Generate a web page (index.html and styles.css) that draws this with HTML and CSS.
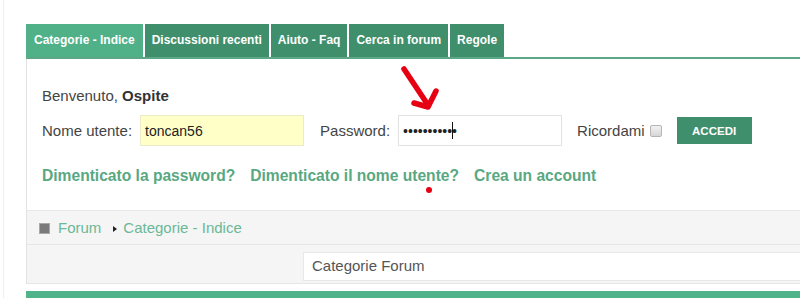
FILE: index.html
```html
<!DOCTYPE html>
<html>
<head>
  <title>Forum - Categorie</title>
  <meta name="viewport" content="width=device-width, initial-scale=1">
  <link rel="stylesheet" href="styles.css">
</head>
<body>
<div class="page">
  <div class="forum">
    <ul class="tabs">
      <li class="active">Categorie - Indice</li>
      <li>Discussioni recenti</li>
      <li>Aiuto - Faq</li>
      <li>Cerca in forum</li>
      <li>Regole</li>
    </ul>

    <div class="forum-body">
      <div class="login">
        <p class="welcome">Benvenuto, <b>Ospite</b></p>
        <form class="login-row" onsubmit="return false">
          <label class="lbl">Nome utente:</label>
          <input type="text" class="field user" value="toncan56">
          <label class="lbl pw-label">Password:</label>
          <span class="pw-wrap">
            <input type="password" class="field" value="12345678901">
            <span class="caret"></span>
          </span>
          <label class="remember">Ricordami <input type="checkbox"></label>
          <button class="btn-login">ACCEDI</button>
        </form>
        <div class="links">
          <a href="#">Dimenticato la password?</a>
          <a href="#">Dimenticato il nome utente?</a>
          <a href="#">Crea un account</a>
        </div>
      </div>

      <div class="breadcrumb">
        <span class="crumb-icon"></span>
        <a href="#">Forum</a>
        <span class="crumb-sep"></span>
        <a href="#">Categorie - Indice</a>
      </div>

      <div class="cat-head">
        <div></div>
        <div class="cat-box">Categorie Forum</div>
      </div>
    </div>

    <div class="green-bar"></div>
  </div>
</div>

<!-- annotazione rossa sopra lo screenshot -->
<svg class="mark" width="60" height="140" viewBox="390 60 60 140">
  <path d="M404 69 L428 105 M414 103 L428 107 L436 91" fill="none" stroke="#e60012" stroke-width="5.5" stroke-linecap="round" stroke-linejoin="round"/>
  <circle cx="429" cy="190" r="3" fill="#e60012"/>
</svg>
</body>
</html>
```

FILE: styles.css
```css
html, body { margin: 0; padding: 0; height: 100%; }
body {
  font-family: 'Liberation Sans', Arial, sans-serif;
  background: #fff;
  color: #444;
  overflow: hidden;
  position: relative;
}
.page {
  margin-left: 3px;
  border-left: 1px solid #efefef;
  padding: 24px 0 0 22px;
  min-height: 100%;
  box-sizing: border-box;
}
.forum { width: 820px; }

.tabs {
  display: flex;
  gap: 2px;
  list-style: none;
  margin: 0;
  padding: 0;
  border-bottom: 2px solid #5aa886;
}
.tabs li {
  height: 33px;
  line-height: 33px;
  padding: 0 7px;
  background: #3f8f6c;
  color: #fff;
  font-size: 12px;
  font-weight: bold;
}
.tabs li.active { background: #50b088; padding: 0 8px; }

.forum-body { border-left: 1px solid #e2e2e2; }

.login { padding: 28px 15px 25px; }
.welcome { margin: 0; font-size: 15px; line-height: 18px; }
.welcome b { color: #333; }

.login-row {
  display: flex;
  align-items: center;
  margin-top: 10px;
  font-size: 15px;
}
.lbl { margin-right: 8px; }
.pw-label { margin-left: 16px; }
.field {
  width: 164px;
  height: 31px;
  box-sizing: border-box;
  padding: 0 4px;
  border: 1px solid #e2e2e2;
  background: #fff;
  font-family: 'Liberation Sans', Arial, sans-serif;
  font-size: 14px;
  color: #222;
  outline: none;
}
.field.user { background: #ffffc8; border-color: #ebebc9; }
.pw-wrap { position: relative; display: inline-block; height: 31px; }
.pw-wrap .caret {
  position: absolute;
  left: 54px;
  top: 7px;
  width: 1px;
  height: 17px;
  background: #111;
}
.remember { margin-left: 15px; display: flex; align-items: center; }
.remember input {
  -webkit-appearance: none;
  appearance: none;
  margin: 1px 0 0 5px;
  width: 12px;
  height: 12px;
  border: 1px solid #b5b5b5;
  border-radius: 2px;
  background: linear-gradient(#f2f2f2, #d6d6d6);
}
.btn-login {
  margin-left: 15px;
  width: 75px;
  height: 27px;
  border: none;
  background: #3f8f6c;
  color: #fff;
  font-family: 'Liberation Sans', Arial, sans-serif;
  font-size: 11.5px;
  font-weight: bold;
  cursor: pointer;
}

.links {
  display: flex;
  gap: 15px;
  margin-top: 21px;
  font-size: 15.6px;
  line-height: 18px;
  font-weight: bold;
}
.links a { color: #58a882; text-decoration: none; }

.breadcrumb {
  display: flex;
  align-items: center;
  border-top: 1px solid #e8e8e8;
  border-bottom: 1px solid #e6e6e6;
  background: #f5f5f5;
  padding: 8px 12px 7px;
  font-size: 15px;
  line-height: 18px;
}
.breadcrumb a { color: #6cb895; text-decoration: none; }
.crumb-icon {
  width: 9px;
  height: 9px;
  background: #7a7a7a;
  border: 1px solid #a8a8a8;
  margin-right: 8px;
}
.crumb-sep {
  width: 0;
  height: 0;
  border-top: 3px solid transparent;
  border-bottom: 3px solid transparent;
  border-left: 4px solid #222;
  margin: 1px 6px 0 12px;
}

.cat-head {
  display: grid;
  grid-template-columns: 276px 1fr;
  background: #f5f5f5;
  padding: 7px 0 2px;
  border-bottom: 1px solid #e6e6e6;
}
.cat-box {
  height: 29px;
  box-sizing: border-box;
  line-height: 26px;
  padding-left: 8px;
  background: #fff;
  border: 1px solid #e8e8e8;
  font-size: 15px;
  color: #555;
}

.green-bar { margin-top: 7px; height: 20px; background: #50b38a; }

.mark { position: absolute; left: 390px; top: 60px; }
```
